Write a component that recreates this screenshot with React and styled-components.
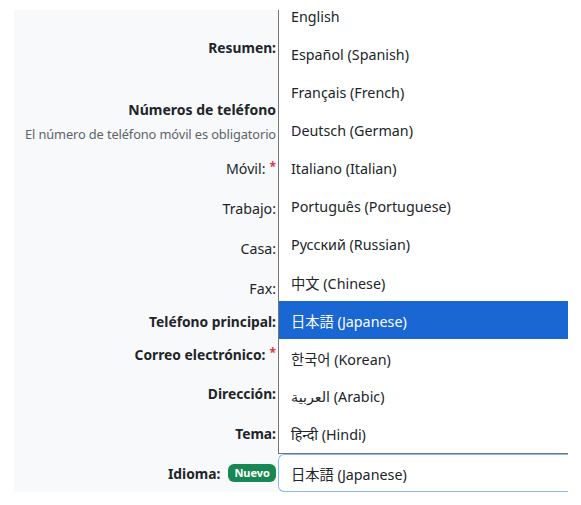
import React from 'react';
import styled, { createGlobalStyle } from 'styled-components';

const GlobalStyle = createGlobalStyle`
  html, body {
    margin: 0;
    padding: 0;
    background: #ffffff;
  }
  body {
    font-family: "Noto Sans", "Noto Sans CJK JP", "DejaVu Sans", sans-serif;
    color: #212529;
  }
`;

const Page = styled.div`
  width: 581px;
  height: 505px;
  padding: 10px 0 0 14px;
  box-sizing: border-box;
  overflow: hidden;
`;

const Form = styled.div`
  display: flex;
  align-items: flex-start;
  height: 482px;
`;

const LabelColumn = styled.div`
  width: 264px;
  height: 482px;
  background: #f8f9fa;
  display: flex;
  flex-direction: column;
  box-sizing: border-box;
  padding-right: 2px;
`;

const Row = styled.div`
  height: ${p => p.h}px;
  display: flex;
  align-items: center;
  justify-content: flex-end;
  gap: 8px;
  flex-shrink: 0;
`;

const Label = styled.span`
  font-size: ${p => (p.bold ? 13.8 : 14.2)}px;
  font-weight: ${p => (p.bold ? 700 : 400)};
  white-space: nowrap;
`;

const Req = styled.span`
  color: #dc3545;
  font-size: 12px;
  font-weight: 700;
  margin-left: 4px;
  position: relative;
  top: -3px;
`;

const Heading = styled.div`
  padding-top: 16px;
  display: flex;
  flex-direction: column;
  align-items: flex-end;
  flex-shrink: 0;
`;

const HeadingTitle = styled.div`
  font-size: 14px;
  font-weight: 700;
  line-height: 20px;
`;

const HeadingNote = styled.div`
  font-size: 12.8px;
  color: #5c636a;
  line-height: 18px;
  margin-top: 5px;
  letter-spacing: -0.1px;
`;

const Badge = styled.span`
  background: #198754;
  color: #ffffff;
  font-size: 11px;
  font-weight: 700;
  border-radius: 6px;
  padding: 0 6px;
  height: 18px;
  line-height: 18px;
`;

const ControlColumn = styled.div`
  width: 290px;
  display: flex;
  flex-direction: column;
`;

const ListBox = styled.div`
  height: 444px;
  border-left: 1px solid #767676;
  border-bottom: 1px solid #767676;
  background: #ffffff;
  box-sizing: border-box;
`;

const OptionList = styled.ul`
  list-style: none;
  margin: 0;
  padding: 0;
`;

const Option = styled.li`
  height: 38px;
  display: flex;
  align-items: center;
  padding-left: 12px;
  font-size: 14.3px;
  background: ${p => (p.selected ? '#1a66d2' : 'transparent')};
  color: ${p => (p.selected ? '#ffffff' : '#212529')};

  /* list is scrolled a little: the first row shows only its lower part */
  &:first-child {
    height: 25px;
    box-sizing: border-box;
    padding-top: 1px;
    align-items: flex-start;
    line-height: 12px;
  }
`;

const Select = styled.div`
  height: 38px;
  box-sizing: border-box;
  border: 1px solid #86b7fe;
  border-right: none;
  border-radius: 6px 0 0 6px;
  display: flex;
  align-items: center;
  padding-left: 12px;
  font-size: 14.3px;
  background: #ffffff;
`;

const languages = [
  'English',
  'Español (Spanish)',
  'Français (French)',
  'Deutsch (German)',
  'Italiano (Italian)',
  'Português (Portuguese)',
  'Русский (Russian)',
  '中文 (Chinese)',
  '日本語 (Japanese)',
  '한국어 (Korean)',
  'العربية (Arabic)',
  'हिन्दी (Hindi)',
];

export default function App() {
  const selected = '日本語 (Japanese)';
  return (
    <Page>
      <GlobalStyle />
      <Form>
        <LabelColumn>
          <Row h={74}><Label bold>Resumen:</Label></Row>
          <Heading>
            <HeadingTitle>Números de teléfono</HeadingTitle>
            <HeadingNote>El número de teléfono móvil es obligatorio</HeadingNote>
          </Heading>
          <Row h={5} />
          <Row h={40}><Label>Móvil:<Req>*</Req></Label></Row>
          <Row h={40}><Label>Trabajo:</Label></Row>
          <Row h={40}><Label>Casa:</Label></Row>
          <Row h={40}><Label>Fax:</Label></Row>
          <Row h={26}><Label bold>Teléfono principal:</Label></Row>
          <Row h={40}><Label bold>Correo electrónico:<Req>*</Req></Label></Row>
          <Row h={38}><Label bold>Dirección:</Label></Row>
          <Row h={42}><Label bold>Tema:</Label></Row>
          <Row h={38}><Label bold>Idioma:</Label><Badge>Nuevo</Badge></Row>
        </LabelColumn>
        <ControlColumn>
          <ListBox>
            <OptionList>
              {languages.map(l => (
                <Option key={l} selected={l === selected}>
                  {l}
                </Option>
              ))}
            </OptionList>
          </ListBox>
          <Select>{selected}</Select>
        </ControlColumn>
      </Form>
    </Page>
  );
}
